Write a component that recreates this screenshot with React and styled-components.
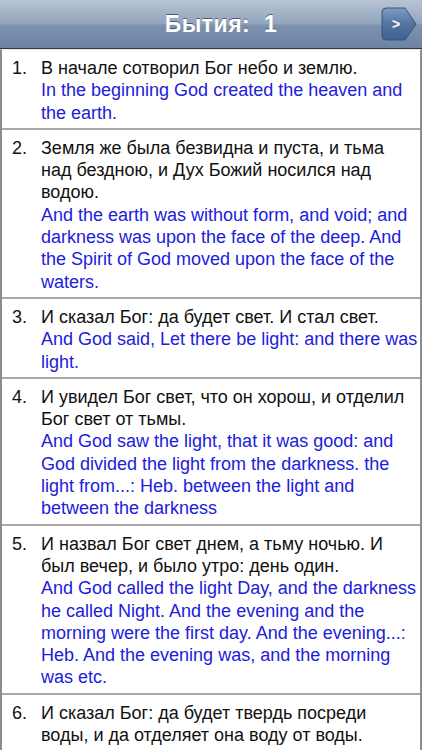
import React from "react";
import styled, { createGlobalStyle } from "styled-components";

const verses = [
  {
    n: 1,
    ru: "В начале сотворил Бог небо и землю.",
    en: "In the beginning God created the heaven and the earth.",
  },
  {
    n: 2,
    ru: "Земля же была безвидна и пуста, и тьма над бездною, и Дух Божий носился над водою.",
    en: "And the earth was without form, and void; and darkness was upon the face of the deep. And the Spirit of God moved upon the face of the waters.",
  },
  {
    n: 3,
    ru: "И сказал Бог: да будет свет. И стал свет.",
    en: "And God said, Let there be light: and there was light.",
  },
  {
    n: 4,
    ru: "И увидел Бог свет, что он хорош, и отделил Бог свет от тьмы.",
    en: "And God saw the light, that it was good: and God divided the light from the darkness. the light from...: Heb. between the light and between the darkness",
  },
  {
    n: 5,
    ru: "И назвал Бог свет днем, а тьму ночью. И был вечер, и было утро: день один.",
    en: "And God called the light Day, and the darkness he called Night. And the evening and the morning were the first day. And the evening...: Heb. And the evening was, and the morning was etc.",
  },
  {
    n: 6,
    ru: "И сказал Бог: да будет твердь посреди воды, и да отделяет она воду от воды.",
    en: "And God said, Let there be a firmament in the midst of the waters, and let it divide the waters from the waters.",
  },
];

function App() {
  return (
    <>
      <Global />
      <Screen>
        <NavBar>
          <Title>{"Бытия:  1"}</Title>
          <NextButton>
            <svg width="36" height="34" viewBox="0 0 36 34">
              <defs>
                <linearGradient id="btn" x1="0" y1="0" x2="0" y2="1">
                  <stop offset="0" stopColor="#7f9cc6" />
                  <stop offset="0.5" stopColor="#55739f" />
                  <stop offset="1" stopColor="#3f6296" />
                </linearGradient>
              </defs>
              <path
                d="M5 1 H24 L35 17 L24 33 H5 Q1 33 1 29 V5 Q1 1 5 1 Z"
                fill="url(#btn)"
                stroke="#3a5478"
                strokeWidth="1"
              />
              <text
                x="15"
                y="22"
                fill="#fff"
                fontSize="14"
                fontWeight="bold"
                fontFamily="Liberation Sans, Arial, sans-serif"
                textAnchor="middle"
              >
                &gt;
              </text>
            </svg>
          </NextButton>
        </NavBar>
        <List>
          {verses.map((v) => (
            <Row key={v.n}>
              <Num>{v.n}.</Num>
              <Body>
                <Ru>{v.ru}</Ru>
                <En>{v.en}</En>
              </Body>
            </Row>
          ))}
        </List>
      </Screen>
    </>
  );
}

const Global = createGlobalStyle`
  html, body {
    margin: 0;
    padding: 0;
    background: #fff;
    overflow: hidden;
  }
  body {
    font-family: "Liberation Sans", Arial, sans-serif;
  }
`;

const Screen = styled.div`
  width: 422px;
  height: 750px;
  overflow: hidden;
  background: #fff;
`;

const NavBar = styled.div`
  height: 48px;
  display: flex;
  align-items: center;
  justify-content: center;
  padding-left: 20px;
  position: relative;
  background: linear-gradient(180deg, #b8c4d4 0%, #92a4bc 50%, #7d92b0 52%, #6c83a3 100%);
  border-bottom: 1px solid #2d3642;
`;

const Title = styled.h1`
  margin: 0;
  font-size: 23px;
  font-weight: 700;
  color: #fff;
  white-space: pre;
  letter-spacing: 0.5px;
  text-shadow: 0 -1px 0 rgba(40, 55, 80, 0.7);
`;

const NextButton = styled.div`
  position: absolute;
  right: 5px;
  top: 7px;
  width: 36px;
  height: 34px;
  display: flex;
`;

const List = styled.div`
  border-left: 2px solid #8c8c8c;
  border-right: 2px solid #8c8c8c;
  border-top: 1px solid #e8e8e8;
`;

const Row = styled.div`
  display: flex;
  padding: 7px 2px 4px 0;
  border-bottom: 2px solid #a8a8a8;
  font-size: 18px;
  line-height: 22.3px;
`;

const Num = styled.div`
  width: 39px;
  flex-shrink: 0;
  padding-left: 10px;
  box-sizing: border-box;
  color: #111;
`;

const Body = styled.div`
  flex: 1;
`;

const Ru = styled.div`
  color: #111;
`;

const En = styled.div`
  color: #2020dc;
`;

export default App;
